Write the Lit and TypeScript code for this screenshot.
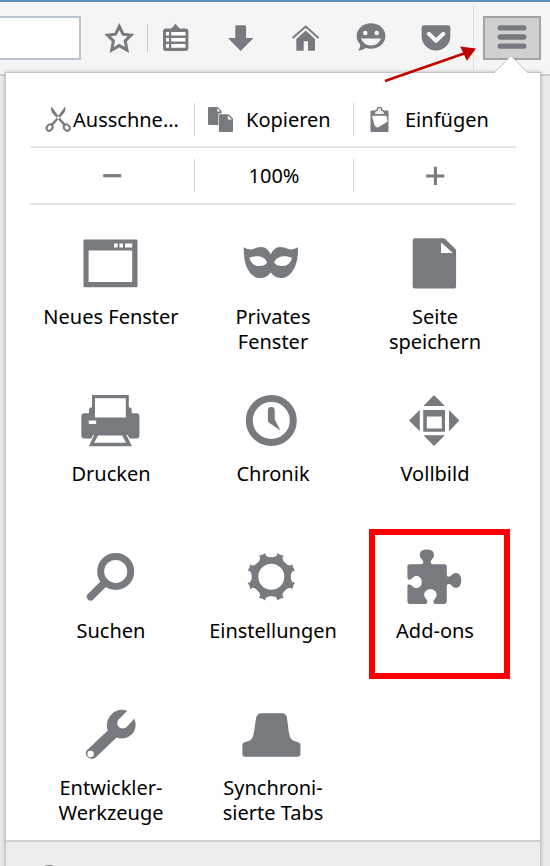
import { LitElement, html, svg, css } from "lit";
import type { SVGTemplateResult } from "lit";
import { customElement, property } from "lit/decorators.js";

const gearOutline = (cx: number, cy: number): string => {
  const at = (r: number, deg: number) => {
    const a = (deg * Math.PI) / 180;
    return `${(cx + r * Math.cos(a)).toFixed(2)} ${(cy + r * Math.sin(a)).toFixed(2)}`;
  };
  let d = "";
  for (let k = 0; k < 8; k++) {
    const c = 22.5 + k * 45;
    d += `${k ? "L" : "M"}${at(22, c - 8)}L${at(24.6, c - 8)}L${at(23.8, c - 3)}L${at(23.8, c + 3)}L${at(24.6, c + 8)}L${at(22, c + 8)}`;
    d += `Q${at(19.6, c + 12)} ${at(19.6, c + 22.5)}Q${at(19.6, c + 33)} ${at(22, c + 37)}`;
  }
  return d + "Z";
};

const glyphs: Record<string, SVGTemplateResult> = {
  star: svg`<path d="M16.3 4.5L20 12.2L28 13.2L22.2 18.8L24 28L16.3 23.6L8.7 28L10.4 18.8L4.6 13.2L12.6 12.2Z" fill="none" stroke="currentColor" stroke-width="3"/>`,
  bookmarks: svg`<path d="M15.5 1.8L20 7H11Z"/><rect x="3" y="6.5" width="25.4" height="22.4" rx="3"/>
    <path fill="#fff" d="M6 10h3v3.6H6zM11.2 10h14.3v3.6H11.2zM6 16h3v3.6H6zM11.2 16h14.3v3.6H11.2zM6 22h3v3.8H6zM11.2 22h14.3v3.8H11.2z"/>`,
  download: svg`<path d="M11.5 3.3h8.4q1.2 0 1.2 1.2V16h7.4L15.7 29L3 16h7.3V4.5q0-1.2 1.2-1.2Z"/>`,
  home: svg`<path d="M15.7 8.6L25 17v11.7h-7V19.3h-4.3v9.4H6.3V17Z"/><path d="M2.6 16L15.7 4.6L28.6 16" fill="none" stroke="currentColor" stroke-width="2"/>`,
  smile: svg`<ellipse cx="16" cy="14" rx="14.4" ry="12.7"/><path d="M5 20Q6 25 3 28.8Q9 28 13 24Z"/>
    <circle cx="10.3" cy="11" r="2.3" fill="#f5f5f5"/><circle cx="21.7" cy="11" r="2.3" fill="#f5f5f5"/>
    <path d="M6 16.6H26Q23.5 23.4 16 23.4T6 16.6Z" fill="#f5f5f5"/>`,
  pocket: svg`<path d="M4 3.3H28Q30.4 3.3 30.4 5.7V14A14.4 14.6 0 0 1 1.6 14V5.7Q1.6 3.3 4 3.3Z"/>
    <path d="M8.8 11.8L16 18.8L23.4 11.8" fill="none" stroke="#f5f5f5" stroke-width="4" stroke-linecap="round" stroke-linejoin="round"/>`,
  menu: svg`<rect x="1.6" y="3.2" width="28.8" height="5.4" rx="2.4"/><rect x="1.6" y="12.3" width="28.8" height="5.4" rx="2.4"/><rect x="1.6" y="21.4" width="28.8" height="5.4" rx="2.4"/>`,
  cut: svg`<g fill="none" stroke="currentColor"><ellipse cx="4.6" cy="21.6" rx="2.7" ry="3.4" transform="rotate(40 4.6 21.6)" stroke-width="2"/>
    <ellipse cx="21.8" cy="21.6" rx="2.7" ry="3.4" transform="rotate(-40 21.8 21.6)" stroke-width="2"/></g>
    <path d="M6.4 .6Q5 3.6 7 6.4L19.4 20.4L21 18.6L14.6 11.4ZM20.2 .6Q21.6 3.6 19.4 6.4L7 20.4L5.6 18.6L12 11.4Z"/>`,
  copy: svg`<path d="M2 1H10.5L14.6 5V7.4H11.4V19H2Q1 19 1 18V2Q1 1 2 1Z"/><path d="M10.2 2.2V5.4H13.4Z" fill="#fff"/>
    <path d="M13 8.2H21.5L26 12.6V25Q26 26 25 26H13Q12 26 12 25V9.2Q12 8.2 13 8.2Z"/><path d="M20.8 9.4V13.4H25Z" fill="#fff"/>`,
  paste: svg`<path d="M5.5 4.5H21.5Q22.5 4.5 22.5 5.5V25Q22.5 26 21.5 26H5.5Q4.5 26 4.5 25V5.5Q4.5 4.5 5.5 4.5Z"/>
    <path d="M8 8.6Q8.4 4.6 11.2 4.2Q11.4 1.4 13.5 1.4T15.8 4.2Q18.6 4.6 19 8.6Z" fill="#eee" stroke="currentColor" stroke-width="1.4"/>
    <path d="M6.6 9.8H20.4L21.6 15.4L12 21.4Q9.4 21.6 8.4 19L6.2 11Z" fill="#fff"/>`,
  minus: svg`<path d="M4.2 12.1H22.2V15.3H4.2Z"/>`,
  plus: svg`<path d="M4.2 12.4H11.9V4.7H14.9V12.4H22.4V15.4H14.9V22.9H11.9V15.4H4.2Z"/>`,
  window: svg`<path fill-rule="evenodd" d="M3.5 6.6H55.5Q56.5 6.6 56.5 7.6V53.2Q56.5 54.2 55.5 54.2H3.5Q2.5 54.2 2.5 53.2V7.6Q2.5 6.6 3.5 6.6ZM7.6 17.4V49H51.2V17.4ZM33 10.4V14.6H36.6V10.4ZM38.4 10.4V14.6H42V10.4ZM44 10.4V14.6H51.2V10.4Z"/>`,
  mask: svg`<path fill-rule="evenodd" d="M.8 14.3Q4.5 17 9 16.2C12.5 15.2 14.6 14 18.4 14C22.8 14 25.6 17.4 27.7 21.4C29.8 17.4 32.6 14 37 14C40.8 14 42.9 15.2 46.4 16.2Q51 17 55 14.3C55.2 25 53.6 33 48.6 39.6C45 44.2 41 45.4 37.4 45C32.6 44.4 30 42.4 27.7 39.4C25.4 42.4 22.8 44.4 18 45C14.4 45.4 10.4 44.2 6.8 39.6C2 33 .6 25 .8 14.3ZM6.4 24.8C7.6 30 11 33 16 33C20.4 33 22.6 31.6 24.2 29.4C21.6 22.6 12.6 22 6.4 24.8ZM49 24.8C42.8 22 33.8 22.6 31.2 29.4C32.8 31.6 35 33 39.4 33C44.4 33 47.8 30 49 24.8Z"/>`,
  page: svg`<path fill-rule="evenodd" d="M9.7 5.2H38.4Q39.4 5.2 40.2 6L50.4 16Q51.1 16.8 51.1 17.8V53.4Q51.1 55.4 49.1 55.4H9.7Q7.7 55.4 7.7 53.4V7.2Q7.7 5.2 9.7 5.2ZM36 9.2V20H47.8Z"/>`,
  print: svg`<path fill-rule="evenodd" d="M11 5H47.8V17.2Q50.7 17.2 50.7 20V23.3H55.4Q58.4 23.3 58.4 26.3V45.4Q58.4 48.4 55.4 48.4H3.3Q.3 48.4 .3 45.4V26.3Q.3 23.3 3.3 23.3H8V20Q8 17.2 11 17.2ZM14 8.2V27.4H44.8V8.2ZM7.8 30.4V34H15.2V30.4Z"/>
    <path d="M12.2 44.4H46.6L52 56.4H7Z" fill="#fff"/><path fill-rule="evenodd" d="M13.4 44.4H45.2L50.9 56.2H7.9ZM17 45.6L13.2 52.8H45L41.2 45.6Z"/><path d="M10 43H49V45H10Z"/>`,
  clock: svg`<circle cx="28.3" cy="30.5" r="22" fill="none" stroke="currentColor" stroke-width="7"/><path d="M24.9 20.4A3.4 3.4 0 0 1 31.7 20.4V29.2L37.4 40.4L25.8 32.6Q24.9 32 24.9 30.8Z"/>`,
  fullscreen: svg`<path fill-rule="evenodd" d="M29 5L39.9 16H18.4ZM4 30.6L14.8 20V41.2ZM54.4 30.6L44 20V41.2ZM29 56L18.4 45.2H39.9ZM18.2 20H40V41.8H18.2ZM21.8 26.4V38.4H36.8V26.4Z"/>`,
  search: svg`<circle cx="34.7" cy="24.4" r="15" fill="none" stroke="currentColor" stroke-width="7"/><path d="M23.4 36L9.6 49.8" stroke="currentColor" stroke-width="7.6" stroke-linecap="round"/>`,
  gear: svg`<path fill-rule="evenodd" d="${gearOutline(28.3, 29.7)}M28.3 16.7A13 13 0 1 0 28.3 42.7A13 13 0 1 0 28.3 16.7Z"/>`,
  puzzle: svg`<path d="M5 17.2H15.6Q18.6 17.2 18.2 14.6C18 12.6 14.8 11.4 14.8 8C14.8 4.4 17.8 2.6 21.9 2.6S29 4.4 29 8C29 11.4 25.9 12.6 25.7 14.6Q25.4 17.2 28.2 17.2H39.4Q41.8 17.2 41.8 19.6V27.4Q41.8 30 44.4 29.6C46.6 29.2 47.4 26 50.8 26C54.4 26 56.2 29.2 56.2 33.4S54.4 40.8 50.8 40.8C47.4 40.8 46.6 37.4 44.4 37Q41.8 36.6 41.8 39.4V54.6Q41.8 57 39.4 57H30.6Q28.2 57 28.4 54.6C28.6 52.4 31.6 51 31.6 47.8C31.6 44.4 29 42.2 25.4 42.2S19.2 44.4 19.2 47.8C19.2 51 22.2 52.4 22.4 54.6Q22.6 57 20.2 57H4.8Q2.4 57 2.4 54.6V40.2Q2.4 37 4.8 37.4C7 37.6 8 41 11.2 41C14.6 41 16.8 38.6 16.8 35S14.6 29 11.2 29C8 29 7 32.6 4.8 32.8Q2.4 33 2.4 30.2V19.6Q2.4 17.2 5 17.2Z"/>`,
  wrench: svg`<path fill-rule="evenodd" d="M46.2 7L37.6 15.4C35.4 18 36.2 22 38.6 23.6C41 25.2 44 24.6 46 22.8L53.2 14.8C55.8 20.4 54.8 26.6 50.6 30.6C46.4 34.4 40.8 35.4 35.6 33.6L14.6 53.6A5.9 5.9 0 0 1 5.6 46.4L26.8 26.4C24.8 21 26 14.6 30.6 10.2C34.8 6 41 4.6 46.2 7ZM9.6 46.8A3.2 3.2 0 1 0 9.6 53.2A3.2 3.2 0 1 0 9.6 46.8Z"/>`,
  sync: svg`<path d="M18.4 9.2H39Q43 9.2 43.8 13C45.2 20 45 26.4 46.8 32.4Q48.4 36.6 53.6 37.8Q57.4 38.6 57.4 41.4V50Q57.4 52.8 54.6 52.8H2.2Q-.6 52.8 -.6 50V41.4Q-.6 38.6 3.2 37.8Q8.4 36.6 10 32.4C11.8 26.4 11.8 20 13.4 13Q14.4 9.2 18.4 9.2Z"/>`,
  account: svg`<circle cx="13" cy="13" r="12"/>`,
};

@customElement("ui-glyph")
class UiGlyph extends LitElement {
  @property() name = "";
  @property({ type: Number }) size = 32;
  static styles = css`
    :host { display: inline-flex; flex: none; color: #777b7f; }
    .glyph { display: block; fill: currentColor; overflow: visible; }
  `;
  render() {
    return html`<svg class="glyph" aria-hidden="true" width=${this.size} height=${this.size} viewBox="0 0 ${this.size} ${this.size}">${glyphs[this.name]}</svg>`;
  }
}

interface Tile { icon: string; lines: string[]; marked?: boolean }

const tiles: Tile[] = [
  { icon: "window", lines: ["Neues Fenster"] },
  { icon: "mask", lines: ["Privates", "Fenster"] },
  { icon: "page", lines: ["Seite", "speichern"] },
  { icon: "print", lines: ["Drucken"] },
  { icon: "clock", lines: ["Chronik"] },
  { icon: "fullscreen", lines: ["Vollbild"] },
  { icon: "search", lines: ["Suchen"] },
  { icon: "gear", lines: ["Einstellungen"] },
  { icon: "puzzle", lines: ["Add-ons"], marked: true },
  { icon: "wrench", lines: ["Entwickler-", "Werkzeuge"] },
  { icon: "sync", lines: ["Synchroni-", "sierte Tabs"] },
];

const tools = [
  ["bookmarks", "Lesezeichen"],
  ["download", "Downloads"],
  ["home", "Startseite"],
  ["smile", "Chat"],
  ["pocket", "Pocket"],
];

@customElement("app-root")
class AppRoot extends LitElement {
  static styles = css`
    :host {
      display: flex;
      flex-direction: column;
      height: 100vh;
      overflow: hidden;
      background: #ebebeb;
      color: #000;
      font: 20px/25px "Noto Sans", "Open Sans", sans-serif;
    }
    button {
      margin: 0;
      padding: 0;
      border: 0;
      background: none;
      color: inherit;
      font: inherit;
      display: flex;
      align-items: center;
      justify-content: center;
    }
    .toolbar {
      position: relative;
      flex: none;
      display: flex;
      align-items: center;
      padding: 14px 9px 14px 0;
      background: #f5f5f5;
      border-top: 2px solid #5f8fbd;
      border-bottom: 2px solid #d0d0d0;
    }
    .address {
      box-sizing: border-box;
      flex: 1;
      min-width: 0;
      height: 44px;
      margin-right: 22px;
      padding: 0 8px;
      border: 2px solid #bbc3cf;
      border-left: 0;
      background: #fff;
      font: inherit;
    }
    .divider { width: 1px; height: 28px; margin: 0 12px 0 12px; background: #c4c4c4; }
    .tools { display: flex; gap: 33px; }
    .edge { align-self: stretch; width: 1px; margin: -10px 9px -10px 21px; background: #dedede; }
    .menu-button {
      box-sizing: border-box;
      width: 58px;
      height: 44px;
      border: 2px solid #a3a3a3;
      background: #d0d0d0;
    }
    .pointer { position: absolute; right: 72px; top: 43px; z-index: 3; }
    .panel {
      position: relative;
      flex: 1;
      display: flex;
      flex-direction: column;
      margin: -4px 9px 0 5px;
      background: #fff;
      border: 1px solid #c6c6c6;
      border-bottom: 0;
      box-shadow: 0 0 4px rgba(0, 0, 0, 0.25);
    }
    .notch { position: absolute; right: 12px; top: -17px; }
    .row {
      display: grid;
      grid-template-columns: 164fr 159fr 163fr;
      margin: 0 24px;
      padding: 11px 0;
      border-bottom: 2px solid #e6e6e6;
    }
    .row.edit { padding: 30px 0 10px; }
    .cell {
      height: 33px;
      display: flex;
      align-items: center;
      justify-content: center;
    }
    .cell + .cell { border-left: 1px solid #d4d4d4; }
    .edit .cell { justify-content: flex-start; gap: 12px; padding-left: 12px; }
    .edit .cell.tight { gap: 1px; padding-left: 15px; }
    .grid {
      display: grid;
      grid-template-columns: repeat(3, 1fr);
      row-gap: 36px;
      margin: 0 24px;
      padding: 28px 0 15px;
    }
    .tile {
      position: relative;
      min-height: 121px;
      flex-direction: column;
      justify-content: flex-start;
      gap: 11px;
    }
    .line { display: block; }
    .mark {
      position: absolute;
      inset: -18px 6px -11px 15px;
      border: 6px solid #f00;
    }
    .footer {
      flex: 1;
      padding: 22px 30px 0;
      background: #ededed;
      border-top: 2px solid #d0d0d0;
    }
  `;

  render() {
    return html`
      <header class="toolbar">
        <input class="address" type="text" aria-label="Adresse" />
        <button aria-label="Lesezeichen setzen"><ui-glyph name="star"></ui-glyph></button>
        <span class="divider"></span>
        <nav class="tools">
          ${tools.map(([icon, label]) => html`<button aria-label=${label}><ui-glyph name=${icon}></ui-glyph></button>`)}
        </nav>
        <span class="edge"></span>
        <button class="menu-button" aria-label="Menü"><ui-glyph name="menu"></ui-glyph></button>
        <svg class="pointer" width="94" height="38" viewBox="0 0 94 38" aria-hidden="true">
          <path d="M1 36L80 8.5" stroke="#c00000" stroke-width="2.6" />
          <path d="M92 3.4L76.2 1.6L82.8 15.8Z" fill="#c00000" />
        </svg>
      </header>
      <main class="panel">
        <svg class="notch" width="34" height="18" viewBox="0 0 34 18" aria-hidden="true">
          <path d="M0 17L17 0L34 17V18H0Z" fill="#fff" />
          <path d="M0 17L17 0L34 17" fill="none" stroke="#c6c6c6" />
        </svg>
        <div class="row edit">
          <button class="cell tight"><ui-glyph name="cut" size="27"></ui-glyph>Ausschne...</button>
          <button class="cell"><ui-glyph name="copy" size="27"></ui-glyph>Kopieren</button>
          <button class="cell"><ui-glyph name="paste" size="27"></ui-glyph>Einfügen</button>
        </div>
        <div class="row">
          <button class="cell" aria-label="Verkleinern"><ui-glyph name="minus" size="27"></ui-glyph></button>
          <button class="cell">100%</button>
          <button class="cell" aria-label="Vergrößern"><ui-glyph name="plus" size="27"></ui-glyph></button>
        </div>
        <div class="grid">
          ${tiles.map((t) => html`
            <button class="tile">
              <ui-glyph name=${t.icon} size="60"></ui-glyph>
              <span>${t.lines.map((l) => html`<span class="line">${l}</span>`)}</span>
              ${t.marked ? html`<span class="mark"></span>` : ""}
            </button>`)}
        </div>
        <footer class="footer">
          <button aria-label="Konto"><ui-glyph name="account" size="26"></ui-glyph></button>
        </footer>
      </main>
    `;
  }
}
